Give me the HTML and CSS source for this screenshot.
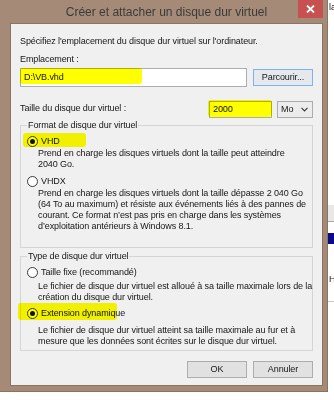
FILE: index.html
```html
<!DOCTYPE html>
<html lang="fr">
<head>
<meta charset="utf-8">
<title>Créer et attacher un disque dur virtuel</title>
<link rel="stylesheet" href="styles.css">
</head>
<body>
<div class="screen">
  <div class="dialog">
    <div class="titlebar">
      <span class="tb-side"></span>
      <span class="title">Créer et attacher un disque dur virtuel</span>
      <span class="close"><svg width="9" height="8" viewBox="0 0 9 8"><path d="M1 0.5 L8 7.5 M8 0.5 L1 7.5" stroke="#fff" stroke-width="1.8" fill="none"/></svg></span>
    </div>
    <div class="client">
      <div class="intro">Spécifiez l'emplacement du disque dur virtuel sur l'ordinateur.</div>
      <div class="label">Emplacement :</div>
      <div class="path-row">
        <div class="textbox path"><span class="val">D:\VB.vhd</span><span class="mark mark-path"></span></div>
        <div class="btn default">Parcourir...</div>
      </div>
      <div class="size-row">
        <span class="size-label">Taille du disque dur virtuel :</span>
        <div class="textbox size"><span class="val">2000</span><span class="mark mark-size"></span></div>
        <div class="select"><span>Mo</span><svg width="7" height="5" viewBox="0 0 7 5"><path d="M0.5 0.8 L3.5 3.8 L6.5 0.8" fill="none" stroke="#3c3c3c" stroke-width="1.2"/></svg></div>
      </div>
      <fieldset class="group g-format">
        <legend>Format de disque dur virtuel</legend>
        <div class="radio r-vhd"><span class="rb on"></span><span class="rl">VHD</span><span class="mark mark-vhd"></span></div>
        <p class="desc d-vhd">Prend en charge les disques virtuels dont la taille peut atteindre<br>2040 Go.</p>
        <div class="radio r-vhdx"><span class="rb"></span><span class="rl">VHDX</span></div>
        <p class="desc d-vhdx">Prend en charge les disques virtuels dont la taille dépasse 2 040 Go<br>(64 To au maximum) et résiste aux événements liés à des pannes de<br>courant. Ce format n’est pas pris en charge dans les systèmes<br>d’exploitation antérieurs à Windows 8.1.</p>
      </fieldset>
      <fieldset class="group g-type">
        <legend>Type de disque dur virtuel</legend>
        <div class="radio r-fixe"><span class="rb"></span><span class="rl">Taille fixe (recommandé)</span></div>
        <p class="desc d-fixe">Le fichier de disque dur virtuel est alloué à sa taille maximale lors de la<br>création du disque dur virtuel.</p>
        <div class="radio r-dyn"><span class="rb on"></span><span class="rl">Extension dynamique</span><span class="mark mark-dyn"></span></div>
        <p class="desc d-dyn">Le fichier de disque dur virtuel atteint sa taille maximale au fur et à<br>mesure que les données sont écrites sur le disque dur virtuel.</p>
      </fieldset>
      <div class="buttons">
        <div class="btn">OK</div>
        <div class="btn">Annuler</div>
      </div>
    </div>
  </div>
  <div class="behind">
    <div class="bk-top">la</div>
    <div class="bk-band"></div>
    <div class="bk-gap"></div>
    <div class="bk-blue"></div>
    <div class="bk-h">H</div>
    <div class="bk-line"></div>
  </div>
</div>
</body>
</html>
```
FILE: styles.css
```css
* { box-sizing: border-box; }
html, body { margin: 0; padding: 0; }
body {
  width: 334px;
  height: 400px;
  overflow: hidden;
  background: #ffffff;
  font-family: "Liberation Sans", Arial, sans-serif;
  font-size: 9px;
  line-height: 11px;
  color: #161616;
  letter-spacing: -0.1px;
}
.screen { display: flex; height: 400px; }

.dialog {
  width: 328px;
  height: 392px;
  flex: none;
  background: #a58b77;
  padding: 0 6px 7px 11px;
  display: flex;
  flex-direction: column;
  box-shadow: inset -1px -1px 0 #8a735f;
}
.titlebar {
  height: 24px;
  flex: none;
  display: grid;
  grid-template-columns: 1fr auto 1fr;
}
.title {
  font-size: 12px;
  line-height: 25px;
  color: #3b3b3b;
  letter-spacing: 0;
  white-space: nowrap;
}
.close {
  justify-self: end;
  width: 25px;
  height: 18px;
  margin-right: -1px;
  background: #c75050;
  display: flex;
  align-items: center;
  justify-content: center;
}
.close svg { display: block; }

.client {
  height: 361px;
  flex: none;
  background: #f0f0f0;
  box-shadow: 0 0 0 1px #8c7462;
  padding: 12px 9px 7px;
  display: flex;
  flex-direction: column;
}
.intro { white-space: nowrap; }
.label { margin-top: 7px; }

.path-row {
  margin-top: 3px;
  height: 19px;
  display: flex;
  align-items: center;
  gap: 6px;
}
.textbox {
  position: relative;
  background: #fff;
  border: 1px solid #abadb3;
  padding-left: 3px;
}
.textbox.path { width: 227px; height: 19px; line-height: 17px; }
.textbox.size { width: 63px; height: 17px; line-height: 15px; }

.btn {
  width: 60px;
  height: 17px;
  background: #e1e1e1;
  border: 1px solid #adadad;
  text-align: center;
  line-height: 15px;
}
.btn.default { border-color: #7eb4ea; background: #e5e8ec; }

.size-row {
  margin-top: 14px;
  height: 17px;
  display: flex;
  align-items: center;
}
.size-label { flex: 1; margin-top: -2px; }
.select {
  width: 36px;
  height: 17px;
  margin-left: 5px;
  background: #ececec;
  border: 1px solid #acacac;
  display: flex;
  align-items: center;
  justify-content: space-between;
  padding: 0 4px 0 3px;
}
.select svg { display: block; }

.mark {
  position: absolute;
  background: #ffff00;
  mix-blend-mode: multiply;
  border-radius: 3px;
}
.mark-path { left: -1px; top: -1px; width: 122px; height: 16px; }
.mark-size { left: -2px; top: -2px; width: 64px; height: 17px; }
.mark-vhd { left: 2px; top: -2px; width: 63px; height: 14px; }
.mark-dyn { left: -3px; top: -4px; width: 99px; height: 17px; }

.group {
  margin: 0;
  padding: 0 0 15px;
  border: 1px solid #d5d5d5;
  min-width: 0;
}
.group legend {
  margin-left: 6px;
  padding: 0 1px;
  line-height: 11px;
}
.g-format { margin-top: 2px; }
.g-type { margin-top: 3px; padding-bottom: 3px; }

.radio {
  position: relative;
  height: 12px;
  display: flex;
  align-items: center;
  padding-left: 6px;
}
.rb {
  width: 11px;
  height: 11px;
  flex: none;
  border: 1px solid #3a3a3a;
  border-radius: 50%;
  background: #fff;
  display: flex;
  align-items: center;
  justify-content: center;
}
.rb.on::after {
  content: "";
  width: 5px;
  height: 5px;
  border-radius: 50%;
  background: #111;
}
.rl { margin-left: 3px; }

.desc {
  margin: 0 0 0 17px;
  white-space: nowrap;
  line-height: 11px;
}
.r-vhd { margin-top: 4px; }
.d-vhd { margin-top: 1px; }
.r-vhdx { margin-top: 5px; }
.d-vhdx { margin-top: 1px; }
.r-fixe { margin-top: 4px; }
.d-fixe { margin-top: 3px; }
.r-dyn { margin-top: 4px; }
.d-dyn { margin-top: 6px; }

.buttons {
  margin-top: 10px;
  display: flex;
  justify-content: flex-end;
  gap: 6px;
}

.behind {
  flex: 1;
  overflow: hidden;
  display: flex;
  flex-direction: column;
}
.bk-top { height: 205px; padding: 2px 0 0 1px; color: #222; }
.bk-band { height: 17px; background: #e8e8e8; border-bottom: 1px solid #a8a8a8; }
.bk-gap { height: 11px; }
.bk-blue { height: 11px; background: #0a0a8c; }
.bk-h { height: 57px; padding: 30px 0 0 1px; color: #222; }
.bk-line { height: 1px; background: #c8c8c8; }
```
